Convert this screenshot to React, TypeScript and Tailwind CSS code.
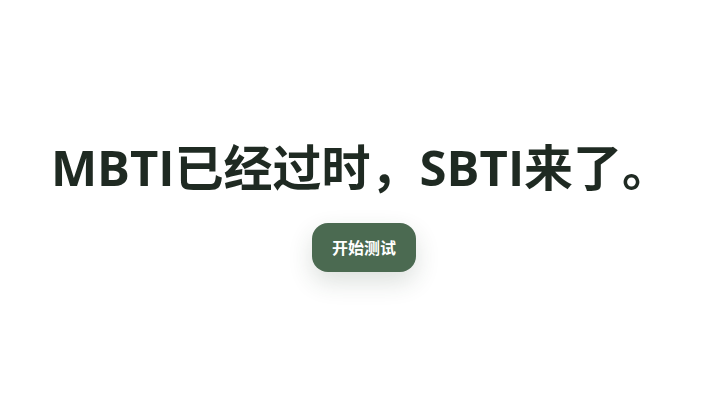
export default function App() {
  return (
    <div className="min-h-screen bg-white flex flex-col items-center justify-center pl-[25px] pb-[12px] font-['Open_Sans','Noto_Sans_CJK_SC',sans-serif]">
      <h1 className="text-[49px] leading-[60px] font-bold text-[#1f2a22] -translate-x-[3px]">
        MBTI已经过时，SBTI来了。
      </h1>
      <button className="mt-[26px] w-[104px] h-[49px] rounded-[16px] bg-[#4b6a51] text-white text-[16px] font-bold font-['Noto_Sans_CJK_SC',sans-serif] shadow-[0_10px_24px_rgba(40,60,45,0.16)]">
        开始测试
      </button>
    </div>
  );
}
